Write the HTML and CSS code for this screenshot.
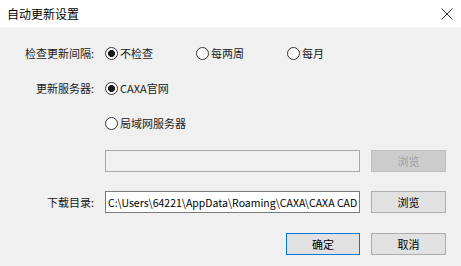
FILE: index.html
```html
<!DOCTYPE html>
<html lang="zh-CN">
<head>
    <meta charset="UTF-8">
    <meta name="viewport" content="width=device-width, initial-scale=1.0">
    <title>自动更新设置</title>
    <link rel="stylesheet" href="styles.css">
</head>
<body>
    <div class="titlebar">
        <span class="title">自动更新设置</span>
        <svg class="close" width="12" height="12" viewBox="0 0 12 12">
            <path d="M0.5 0.5 L11.5 11.5 M11.5 0.5 L0.5 11.5" stroke="#333" stroke-width="1" fill="none"/>
        </svg>
    </div>

    <form class="dialog">
        <div class="row row-interval">
            <span class="label">检查更新间隔:</span>
            <label class="option"><input type="radio" name="interval" checked>不检查</label>
            <label class="option"><input type="radio" name="interval">每两周</label>
            <label class="option"><input type="radio" name="interval">每月</label>
        </div>

        <div class="row row-server">
            <span class="label">更新服务器:</span>
            <label class="option"><input type="radio" name="server" checked>CAXA官网</label>
        </div>

        <div class="row row-lan">
            <span class="label"></span>
            <label class="option"><input type="radio" name="server">局域网服务器</label>
        </div>

        <div class="row row-lanpath">
            <span class="label"></span>
            <input class="field" type="text" disabled>
            <button class="btn" type="button" disabled>浏览</button>
        </div>

        <div class="row row-download">
            <span class="label">下载目录:</span>
            <input class="field" type="text" value="C:\Users\64221\AppData\Roaming\CAXA\CAXA CAD\2020\Update">
            <button class="btn" type="button">浏览</button>
        </div>

        <div class="actions">
            <button class="btn btn-default" type="button">确定</button>
            <button class="btn" type="button">取消</button>
        </div>
    </form>
</body>
</html>
```

FILE: styles.css
```css
body {
    margin: 0;
    width: 461px;
    height: 266px;
    background: #f0f0f0;
    font-family: "Noto Sans CJK SC", "Noto Sans", sans-serif;
    font-size: 11px;
    color: #1a1a1a;
    overflow: hidden;
}

.titlebar {
    height: 27px;
    background: #fff;
    display: flex;
    align-items: center;
    justify-content: space-between;
    padding: 0 8px 0 7px;
}

.title {
    font-size: 12px;
    line-height: 27px;
    color: #000;
}

.close {
    display: block;
}

.dialog {
    margin: 0;
    padding-top: 15px;
}

.row {
    display: flex;
    align-items: center;
    height: 22px;
    line-height: 22px;
}

.row-server,
.row-lan {
    margin-top: 13px;
}

.row-lanpath {
    margin-top: 16px;
}

.row-download {
    margin-top: 19px;
}

.label {
    width: 94px;
    margin-right: 11px;
    text-align: right;
    flex-shrink: 0;
    white-space: nowrap;
}

.option {
    width: 91px;
    display: flex;
    align-items: center;
    white-space: nowrap;
}

.option input {
    appearance: none;
    -webkit-appearance: none;
    width: 13px;
    height: 13px;
    margin: 0 2px 0 0;
    border: 1px solid #333;
    border-radius: 50%;
    background: #fff;
    flex-shrink: 0;
}

.option input:checked {
    background: radial-gradient(circle, #1a1a1a 0 3.2px, #fff 3.8px);
}

.field {
    width: 255px;
    height: 22px;
    box-sizing: border-box;
    margin: 0;
    padding: 0 2px;
    border: 1px solid #7a7a7a;
    background: #fff;
    font-family: inherit;
    font-size: 10.5px;
    color: #000;
    outline: none;
}

.field:disabled {
    background: #f0f0f0;
    border-color: #a8a8a8;
}

.btn {
    width: 75px;
    height: 22px;
    box-sizing: border-box;
    margin: 0 0 0 11px;
    padding: 0;
    border: 1px solid #adadad;
    background: #e1e1e1;
    font-family: inherit;
    font-size: 11px;
    color: #000;
}

.btn:disabled {
    background: #cccccc;
    border-color: #bfbfbf;
    color: #a0a0a0;
}

.actions {
    display: flex;
    justify-content: flex-end;
    margin-top: 20px;
    padding-right: 15px;
}

.btn-default {
    width: 74px;
    margin-left: 0;
    border-color: #0078d7;
}
```
